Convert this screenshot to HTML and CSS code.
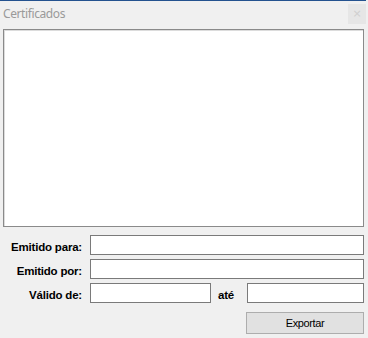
FILE: index.html
```html
<!DOCTYPE html>
<html lang="pt">
<head>
<meta charset="utf-8">
<title>Certificados</title>
<link rel="stylesheet" href="styles.css">
</head>
<body>
<div class="window">
  <div class="titlebar">
    <span class="title">Certificados</span>
    <span class="close">&#215;</span>
  </div>
  <div class="content">
    <div class="listbox"></div>
    <div class="form">
      <div class="row">
        <label class="label">Emitido para:</label>
        <div class="textbox grow"></div>
      </div>
      <div class="row">
        <label class="label">Emitido por:</label>
        <div class="textbox grow"></div>
      </div>
      <div class="row">
        <label class="label">Válido de:</label>
        <div class="textbox date-from"></div>
        <label class="label-ate">até</label>
        <div class="textbox grow"></div>
      </div>
      <div class="actions">
        <button class="button">Exportar</button>
      </div>
    </div>
  </div>
</div>
</body>
</html>
```

FILE: styles.css
```css
html, body {
  margin: 0;
  padding: 0;
  background: #f0f0f0;
}

.window {
  width: 368px;
  height: 338px;
  background: #f0f0f0;
  font-family: "Liberation Sans", Arial, sans-serif;
  font-size: 11px;
  color: #000;
  box-sizing: border-box;
}

.titlebar {
  display: flex;
  align-items: flex-start;
  height: 29px;
  box-sizing: border-box;
  border-top: 1px solid #24528f;
  margin-right: 2px;
}

.title {
  font-family: "Noto Sans", "Open Sans", sans-serif;
  font-size: 12px;
  line-height: 16px;
  color: #9a9a9a;
  padding-top: 5px;
  padding-left: 3px;
  letter-spacing: -0.4px;
}

.close {
  margin-left: auto;
  margin-top: 3px;
  width: 18px;
  height: 20px;
  background: #e6e6e6;
  color: #cfcfcf;
  font-family: "DejaVu Sans", sans-serif;
  font-size: 11px;
  line-height: 20px;
  text-align: center;
}

.content {
  padding: 0 4px 0 3px;
}

.listbox {
  height: 198px;
  background: #fff;
  border: 1px solid #8a8a8a;
  box-shadow: inset 1px 1px 0 #dcdcdc;
  box-sizing: border-box;
}

.form {
  margin-top: 8px;
  display: flex;
  flex-direction: column;
  gap: 4px;
}

.row {
  display: flex;
  align-items: flex-start;
  height: 20px;
}

.label {
  width: 87px;
  box-sizing: border-box;
  padding-right: 8px;
  padding-top: 2px;
  line-height: 20px;
  text-align: right;
  font-weight: bold;
  font-size: 11.5px;
  letter-spacing: -0.2px;
  white-space: nowrap;
}

.textbox {
  height: 20px;
  box-sizing: border-box;
  background: #fff;
  border: 1px solid #7a7a7a;
}

.grow {
  flex: 1;
}

.date-from {
  width: 121px;
}

.label-ate {
  width: 36px;
  box-sizing: border-box;
  padding-left: 7px;
  padding-top: 2px;
  line-height: 20px;
  font-weight: bold;
  font-size: 11.5px;
  letter-spacing: -0.2px;
}

.actions {
  display: flex;
  justify-content: flex-end;
  margin-top: 5px;
}

.button {
  width: 118px;
  height: 22px;
  box-sizing: border-box;
  background: #e1e1e1;
  border: 1px solid #adadad;
  border-radius: 0;
  padding: 0;
  font-family: "Liberation Sans", Arial, sans-serif;
  font-size: 11px;
  line-height: 20px;
  letter-spacing: -0.4px;
  color: #000;
}
```
